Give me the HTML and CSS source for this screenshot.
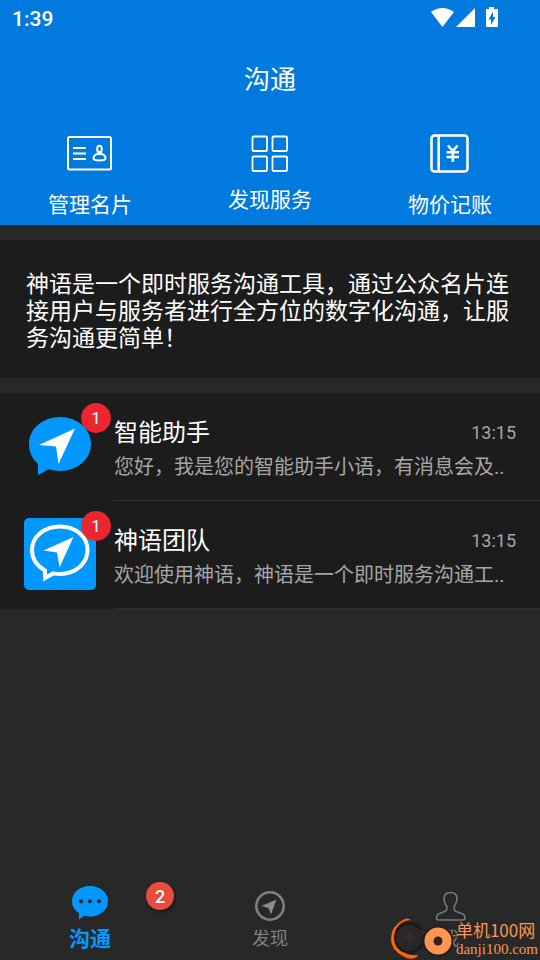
FILE: index.html
```html
<!DOCTYPE html>
<html lang="zh-CN">
<head>
<meta charset="utf-8">
<meta name="viewport" content="width=device-width, initial-scale=1">
<title>沟通</title>
<link rel="stylesheet" href="styles.css">
</head>
<body>
<div class="app">
  <header class="header">
    <div class="status">
      <span class="clock">1:39</span>
      <svg class="status-icons" width="68" height="22" viewBox="0 0 68 22" fill="#fff" aria-hidden="true">
        <path d="M1 4Q12.500-4 24 4L12.500 19Z"/>
        <path d="M26 19H45V0Z"/>
        <path fill-rule="evenodd" d="M59-1h5V1h3q1 0 1 1V18q0 1-1 1H57q-1 0-1-1V2q0-1 1-1h2ZM63 3.500L58.500 11.500h2.500v5.500l4.500-8h-2.500Z"/>
      </svg>
    </div>
    <h1 class="title">沟通</h1>
    <nav class="tools">
      <a class="tool" href="#card">
        <svg width="48" height="48" viewBox="0 0 48 48" fill="none" stroke="#fff" stroke-width="2" aria-hidden="true">
          <rect x="2" y="7" width="43" height="32.500" rx="1.500"/>
          <path d="M7 18H20M7 23.500H20M7 29H20"/>
          <ellipse cx="33.500" cy="19" rx="2.300" ry="3.200"/>
          <path d="M31.800 23.500Q27.500 25.500 27.500 28.200Q27.500 30.400 33.500 30.400Q39.500 30.400 39.500 28.200Q39.500 25.500 35.200 23.500Q33.500 25 31.800 23.500Z"/>
        </svg>
        <span class="tool-label">管理名片</span>
      </a>
      <a class="tool tool-compact" href="#services">
        <svg width="48" height="48" viewBox="0 0 48 48" fill="none" stroke="#fff" stroke-width="1.800" aria-hidden="true">
          <rect x="6.500" y="6.500" width="14.500" height="14.500" rx="1"/>
          <rect x="26.500" y="6.500" width="14.500" height="14.500" rx="1"/>
          <rect x="6.500" y="26.500" width="14.500" height="14.500" rx="1"/>
          <rect x="26.500" y="26.500" width="14.500" height="14.500" rx="1"/>
        </svg>
        <span class="tool-label">发现服务</span>
      </a>
      <a class="tool" href="#ledger">
        <svg width="48" height="48" viewBox="0 0 48 48" fill="none" stroke="#fff" stroke-width="2.600" aria-hidden="true">
          <rect x="5.500" y="5.500" width="36" height="36" rx="3"/>
          <path d="M12.700 5V42"/>
          <path d="M22 15.500L26.800 21L31.600 15.500M26.800 21V32M20.500 22.200H33M20.500 27H33"/>
        </svg>
        <span class="tool-label">物价记账</span>
      </a>
    </nav>
  </header>

  <main class="main">
    <p class="notice">神语是一个即时服务沟通工具，通过公众名片连接用户与服务者进行全方位的数字化沟通，让服务沟通更简单！</p>
    <ul class="chats">
      <li>
        <a class="chat" href="#assistant">
          <span class="avatar">
            <svg width="72" height="72" viewBox="0 0 72 72" aria-hidden="true">
              <path fill="#0398fe" d="M36 7C53 7 67 18.500 67 34S53 61 36 61Q30 61 24.500 59.300L14 65V54Q5 46.500 5 34C5 18.500 19 7 36 7Z"/>
              <path fill="#fff" d="M51 18.500L15 35L32 36.500L34.500 54Z"/>
            </svg>
            <span class="unread">1</span>
          </span>
          <span class="chat-body">
            <span class="chat-top"><span class="name">智能助手</span><time class="time">13:15</time></span>
            <span class="message">您好，我是您的智能助手小语，有消息会及..</span>
          </span>
        </a>
      </li>
      <li>
        <a class="chat" href="#team">
          <span class="avatar">
            <svg width="72" height="72" viewBox="0 0 72 72" aria-hidden="true">
              <rect width="72" height="72" rx="5" fill="#0398fe"/>
              <path fill="none" stroke="#fff" stroke-width="4" d="M36 8.500C51.500 8.500 63.500 18.500 63.500 32S51.500 56 36 56Q32.500 56 29 55.400L21 60V52.500Q8 45 8 32C8 18.500 20.500 8.500 36 8.500Z"/>
              <path fill="#fff" d="M49.500 19L19.500 32.500L33 34.500L35.500 49.500Z"/>
            </svg>
            <span class="unread">1</span>
          </span>
          <span class="chat-body">
            <span class="chat-top"><span class="name">神语团队</span><time class="time">13:15</time></span>
            <span class="message">欢迎使用神语，神语是一个即时服务沟通工..</span>
          </span>
        </a>
      </li>
    </ul>
  </main>

  <nav class="tabs">
    <a class="tab tab-active" href="#chat">
      <svg width="40" height="40" viewBox="0 0 40 40" aria-hidden="true">
        <path fill="#0398fe" d="M20 4C30 4 38 10.500 38 19.300S30 34.600 20 34.600Q16.500 34.600 14 33.800L9 37.500V31Q2 26.500 2 19.300C2 10.500 10 4 20 4Z"/>
        <g fill="#282828"><circle cx="11" cy="19.300" r="2.100"/><circle cx="20" cy="19.300" r="2.100"/><circle cx="29" cy="19.300" r="2.100"/></g>
      </svg>
      <span class="tab-label">沟通</span>
      <span class="tab-badge">2</span>
    </a>
    <a class="tab" href="#discover">
      <svg width="40" height="40" viewBox="0 0 40 40" aria-hidden="true">
        <circle cx="20" cy="24" r="13.700" fill="none" stroke="#808080" stroke-width="2.600"/>
        <path fill="#8c8c8c" d="M26.500 17.500L11.500 24L18.500 26L21 32.500Z"/>
      </svg>
      <span class="tab-label">发现</span>
    </a>
    <a class="tab" href="#me">
      <svg width="40" height="40" viewBox="0 0 40 40" fill="none" stroke="#787878" stroke-width="1.600" aria-hidden="true">
        <path d="M20.500 10.500C16 10.500 14 13.500 14 17C14 20 15.500 22 16.800 24.500C17.600 27 16.500 29 13.500 30L8.500 32Q6.500 33 6.500 36Q6.500 38 8.500 38H33Q35 38 35 36Q35 33 33 32L27.500 30C24.500 29 23.500 27 24.200 24.500C25.500 22 27 20 27 17C27 13.500 25 10.500 20.500 10.500Z"/>
      </svg>
      <span class="tab-label">我</span>
    </a>
  </nav>

  <div class="watermark">
    <svg width="66" height="44" viewBox="0 0 66 44" aria-hidden="true">
      <circle cx="19" cy="22" r="14.500" fill="none" stroke="#1d1818" stroke-width="3"/>
      <path d="M14 22H24M19 17V27" stroke="#3d2b29" stroke-width="2"/>
      <path fill="#f60" d="M21 4Q17 1 13 4Q1 10 1 23Q1 34 13 40Q20 45 27 41L28 39Q20 40 15 37Q4 33 4 22Q4 10 15 5Z"/>
      <path d="M31 14L35 20" stroke="#3d2b29" stroke-width="2"/>
      <circle cx="48" cy="25" r="15.500" fill="#241f1e"/>
      <circle cx="48" cy="25" r="13.500" fill="#ff9550"/>
      <circle cx="48" cy="25" r="4.500" fill="#33201c"/>
    </svg>
    <span class="watermark-text"><span class="watermark-name">单机100网</span><span class="watermark-site">danji100.com</span></span>
  </div>
</div>
</body>
</html>
```
FILE: styles.css
```css
* {
  box-sizing: border-box;
}

body {
  margin: 0;
  background: #282828;
  color: #fff;
  font-family: Roboto, "Noto Sans CJK SC", sans-serif;
}

a {
  color: inherit;
  text-decoration: none;
}

svg {
  display: block;
  overflow: visible;
}

.app {
  position: relative;
  display: flex;
  flex-direction: column;
  min-height: 100vh;
}

.header {
  background: #017adf;
}

.status {
  display: flex;
  align-items: center;
  justify-content: space-between;
  height: 38px;
  padding: 0 42px 0 12px;
}

.clock {
  font-size: 21px;
  font-weight: 500;
  line-height: 24px;
}

.title {
  margin: 0;
  padding: 24px 0 32px;
  font-size: 26px;
  font-weight: 400;
  line-height: 36px;
  text-align: center;
}

.tools {
  display: grid;
  grid-template-columns: repeat(3, 1fr);
  padding-bottom: 8px;
}

.tool {
  display: flex;
  flex-direction: column;
  align-items: center;
  gap: 15px;
}

.tool-compact {
  gap: 10px;
}

.tool-label {
  font-size: 21px;
  line-height: 24px;
}

.main {
  flex: 1;
}

.notice {
  margin: 15px 0;
  padding: 31px 26px 26px;
  background: #1c1c1c;
  font-size: 23px;
  line-height: 27px;
}

.chats {
  margin: 0;
  padding: 0;
  list-style: none;
  background: #1c1c1c;
}

.chat {
  display: flex;
  gap: 18px;
  padding-left: 24px;
}

.avatar {
  position: relative;
  flex: none;
  margin: 17px 0;
}

.unread {
  position: absolute;
  top: -7px;
  right: -15px;
  width: 30px;
  height: 30px;
  border-radius: 50%;
  background: #ec2631;
  font-size: 17px;
  line-height: 30px;
  text-align: center;
}

.chat-body {
  flex: 1;
  min-width: 0;
  height: 108px;
  padding: 23px 24px 0 0;
  border-bottom: 1px solid #303030;
}

.chat-top {
  display: flex;
  align-items: center;
  justify-content: space-between;
}

.name {
  font-size: 24px;
  line-height: 34px;
}

.time {
  color: #a6a6a6;
  font-size: 18px;
  line-height: 32px;
}

.message {
  display: block;
  overflow: hidden;
  color: #a6a6a6;
  font-size: 20px;
  line-height: 34px;
  white-space: nowrap;
}

.tabs {
  display: grid;
  grid-template-columns: repeat(3, 1fr);
  padding: 12px 0 9px;
  color: #808080;
}

.tab {
  position: relative;
  display: flex;
  flex-direction: column;
  align-items: center;
  gap: 5px;
  font-size: 18px;
}

.tab-active {
  color: #0398fe;
  font-size: 21px;
  font-weight: 700;
}

.tab-label {
  line-height: 24px;
}

.tab-badge {
  position: absolute;
  top: 0;
  left: calc(50% + 56px);
  width: 28px;
  height: 28px;
  border-radius: 50%;
  background: #e74c3c;
  box-shadow: 1px 2px 3px rgba(0, 0, 0, 0.4);
  color: #fff;
  font-size: 18px;
  font-weight: 500;
  line-height: 30px;
  text-align: center;
}

.watermark {
  position: absolute;
  right: 2px;
  bottom: 0;
  display: flex;
  align-items: flex-end;
  color: #ff9550;
}

.watermark-text {
  display: flex;
  flex-direction: column;
  padding-bottom: 2px;
}

.watermark-name {
  font-family: "Noto Sans CJK SC", sans-serif;
  font-size: 17px;
  line-height: 20px;
}

.watermark-site {
  font-family: "Liberation Serif", serif;
  font-size: 15px;
  line-height: 18px;
}
```
